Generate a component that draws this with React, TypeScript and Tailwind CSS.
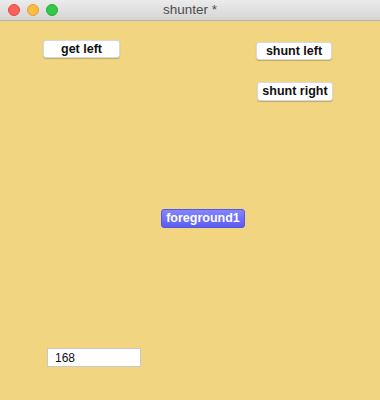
import React from 'react';

const font = { fontFamily: '"Helvetica Neue", "Liberation Sans", Arial, sans-serif' };

function Btn({ label, className }: { label: string; className: string }) {
  return (
    <button
      className={`absolute flex items-center justify-center rounded-[3px] bg-white border border-[#d9d9d9] shadow-[0_1px_1px_rgba(0,0,0,0.2)] text-[12.5px] font-bold text-[#111] leading-none ${className}`}
    >
      {label}
    </button>
  );
}

export default function App() {
  return (
    <div className="w-[380px] h-[400px] flex flex-col bg-[#f1d581] overflow-hidden" style={font}>
      {/* title bar */}
      <div className="relative h-[21px] shrink-0 flex items-center justify-center bg-gradient-to-b from-[#ebebeb] to-[#d5d5d5] border-b border-[#b3b3b3]">
        <div className="absolute left-[8px] top-[4px] flex gap-[7px]">
          <span className="w-[12px] h-[12px] rounded-full bg-[#fc605c] border border-[#de4a45]" />
          <span className="w-[12px] h-[12px] rounded-full bg-[#fdbc40] border border-[#dea235]" />
          <span className="w-[12px] h-[12px] rounded-full bg-[#34c84a] border border-[#27aa35]" />
        </div>
        <span className="text-[13.5px] text-[#4d4d4d]">shunter *</span>
      </div>

      {/* canvas */}
      <div className="relative flex-1">
        <Btn label="get left" className="left-[43px] top-[19px] w-[77px] h-[18px]" />
        <Btn label="shunt left" className="left-[256px] top-[21px] w-[76px] h-[18px]" />
        <Btn label="shunt right" className="left-[257px] top-[61px] w-[76px] h-[19px]" />
        <div className="absolute left-[161px] top-[188px] w-[84px] h-[19px] flex items-center justify-center rounded-[3px] bg-gradient-to-b from-[#8484ff] to-[#5c5cf2] border border-[#5656e0] text-[12.5px] font-bold text-white leading-none">
          foreground1
        </div>
        <div className="absolute left-[47px] top-[327px] w-[94px] h-[19px] bg-white border border-[#c8c8c8] flex items-center px-[7px] text-[12px] text-[#111]">
          168
        </div>
      </div>
    </div>
  );
}
